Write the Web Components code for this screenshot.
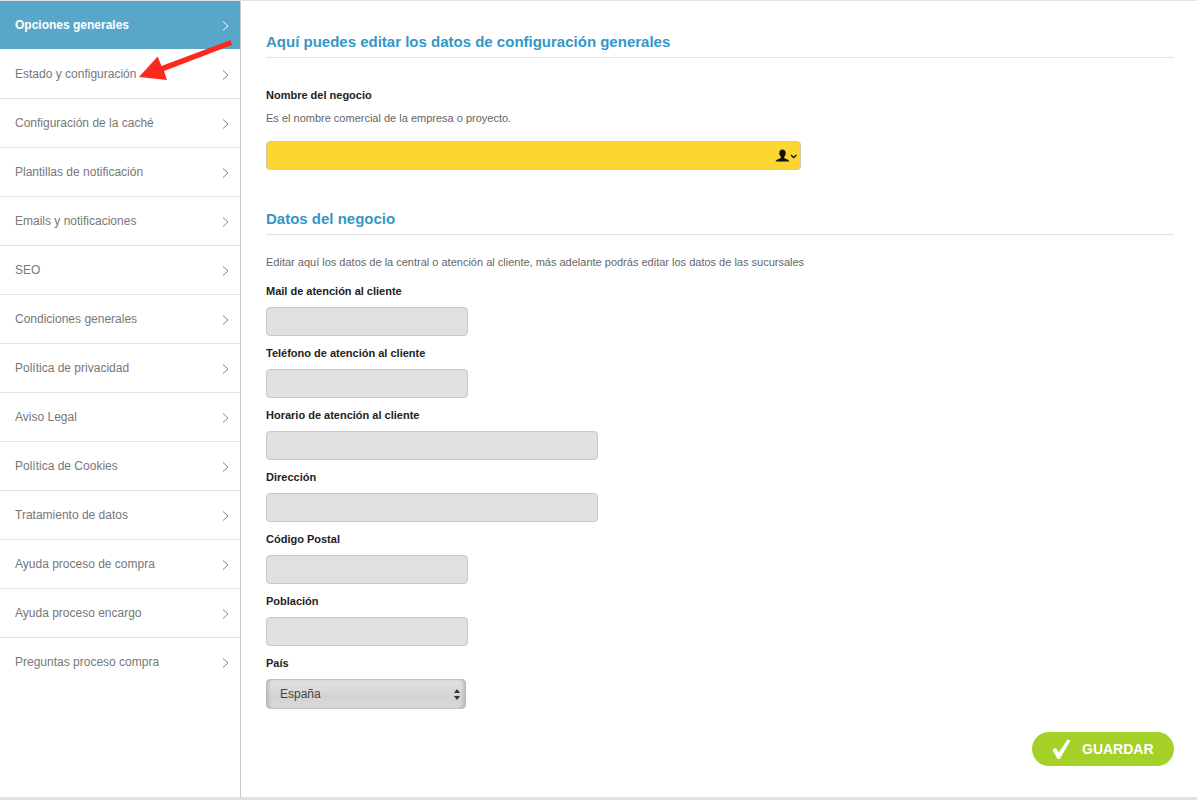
<!DOCTYPE html>
<html lang="es">
<head>
<meta charset="utf-8">
<title>Opciones generales</title>
<style>
  html, body { margin: 0; padding: 0; background: #fff; }
  body { font-family: "Liberation Sans", Arial, sans-serif; overflow: hidden; }
</style>
</head>
<body>
<config-page>
  <side-menu slot="menu">
    <menu-item active>Opciones generales</menu-item>
    <menu-item>Estado y configuración</menu-item>
    <menu-item>Configuración de la caché</menu-item>
    <menu-item>Plantillas de notificación</menu-item>
    <menu-item>Emails y notificaciones</menu-item>
    <menu-item>SEO</menu-item>
    <menu-item>Condiciones generales</menu-item>
    <menu-item>Política de privacidad</menu-item>
    <menu-item>Aviso Legal</menu-item>
    <menu-item>Política de Cookies</menu-item>
    <menu-item>Tratamiento de datos</menu-item>
    <menu-item>Ayuda proceso de compra</menu-item>
    <menu-item>Ayuda proceso encargo</menu-item>
    <menu-item last>Preguntas proceso compra</menu-item>
  </side-menu>

  <section-title>Aquí puedes editar los datos de configuración generales</section-title>
  <form-field label="Nombre del negocio" hint="Es el nombre comercial de la empresa o proyecto." style="margin-top:30px">
    <yellow-input></yellow-input>
  </form-field>

  <section-title style="margin-top:27px">Datos del negocio</section-title>
  <help-text style="margin-top:20px">Editar aquí los datos de la central o atención al cliente, más adelante podrás editar los datos de las sucursales</help-text>
  <form-field label="Mail de atención al cliente" style="margin-top:15px"><grey-input></grey-input></form-field>
  <form-field label="Teléfono de atención al cliente"><grey-input></grey-input></form-field>
  <form-field label="Horario de atención al cliente"><grey-input wide></grey-input></form-field>
  <form-field label="Dirección"><grey-input wide></grey-input></form-field>
  <form-field label="Código Postal"><grey-input></grey-input></form-field>
  <form-field label="Población"><grey-input></grey-input></form-field>
  <form-field label="País"><mac-select>España</mac-select></form-field>

  <save-button>GUARDAR</save-button>
  <red-arrow slot="overlay"></red-arrow>
</config-page>

<script>
// Contenedor general: menú a la izquierda, formulario a la derecha
class ConfigPage extends HTMLElement {
  constructor() {
    super();
    this.attachShadow({ mode: "open" });
    this.shadowRoot.innerHTML = `
      <style>
        :host {
          display: grid;
          grid-template-columns: 241px 1fr;
          height: 800px;
          box-sizing: border-box;
          border-top: 1px solid #e2e2e2;
          border-bottom: 3px solid #e0e0e0;
          position: relative;
        }
        .menu { border-right: 1px solid #c8c8c8; }
        .main {
          padding: 29px 23px 0 25px;
          display: flex;
          flex-direction: column;
          min-width: 0;
        }
      </style>
      <div class="menu"><slot name="menu"></slot></div>
      <div class="main"><slot></slot></div>
      <slot name="overlay"></slot>
    `;
  }
}

class SideMenu extends HTMLElement {
  constructor() {
    super();
    this.attachShadow({ mode: "open" });
    this.shadowRoot.innerHTML = `
      <style>:host { display: flex; flex-direction: column; }</style>
      <slot></slot>
    `;
  }
}

class MenuItem extends HTMLElement {
  constructor() {
    super();
    this.attachShadow({ mode: "open" });
    this.shadowRoot.innerHTML = `
      <style>
        :host {
          display: flex;
          align-items: center;
          justify-content: space-between;
          box-sizing: border-box;
          height: 49px;
          padding: 0 11px 0 15px;
          border-bottom: 1px solid #e2e2e2;
          font-size: 12px;
          color: #777;
        }
        :host([active]) {
          background: #58a6c9;
          color: #fff;
          font-weight: bold;
          height: 48px;
          margin-bottom: 1px;
          border-bottom: 0;
        }
        :host([last]) { border-bottom-color: transparent; }
        svg { display: block; width: 7px; height: 10px; margin-top: 2px; }
        path { fill: none; stroke: #888; stroke-width: 1; }
        :host([active]) path { stroke: #fff; }
      </style>
      <span><slot></slot></span>
      <svg viewBox="0 0 7 10"><path d="M1 .5 6 5 1 9.500"/></svg>
    `;
  }
}

class SectionTitle extends HTMLElement {
  constructor() {
    super();
    this.attachShadow({ mode: "open" });
    this.shadowRoot.innerHTML = `
      <style>
        :host {
          display: block;
          height: 27px;
          border-bottom: 1px solid #e2e2e2;
          font-size: 15px;
          line-height: 24px;
          font-weight: bold;
          color: #3497c6;
        }
      </style>
      <slot></slot>
    `;
  }
}

class HelpText extends HTMLElement {
  constructor() {
    super();
    this.attachShadow({ mode: "open" });
    this.shadowRoot.innerHTML = `
      <style>
        :host { display: block; font-size: 11px; line-height: 14px; color: #666; }
      </style>
      <slot></slot>
    `;
  }
}

class FormField extends HTMLElement {
  constructor() {
    super();
    this.attachShadow({ mode: "open" });
  }

  connectedCallback() {
    const label = this.getAttribute("label") || "";
    const hint = this.getAttribute("hint");
    this.shadowRoot.innerHTML = `
      <style>
        :host { display: block; margin-bottom: 10px; }
        .label { font-size: 11px; line-height: 14px; font-weight: bold; color: #222; margin-bottom: 9px; }
        .hint { font-size: 11px; line-height: 14px; color: #666; margin: 9px 0 16px; }
      </style>
      <div class="label">${label}</div>
      ${hint ? `<div class="hint">${hint}</div>` : ""}
      <slot></slot>
    `;
  }
}

class GreyInput extends HTMLElement {
  constructor() {
    super();
    this.attachShadow({ mode: "open" });
    this.shadowRoot.innerHTML = `
      <style>
        :host { display: block; width: 202px; height: 29px; }
        :host([wide]) { width: 332px; }
        input {
          display: block;
          box-sizing: border-box;
          width: 100%;
          height: 100%;
          margin: 0;
          background: #e0e0e0;
          border: 1px solid #c8c8c8;
          border-radius: 4px;
        }
      </style>
      <input type="text">
    `;
  }
}

// Campo amarillo con el icono de usuario del autocompletado
class YellowInput extends HTMLElement {
  constructor() {
    super();
    this.attachShadow({ mode: "open" });
    this.shadowRoot.innerHTML = `
      <style>
        :host { display: block; position: relative; width: 535px; height: 29px; }
        input {
          display: block;
          box-sizing: border-box;
          width: 100%;
          height: 100%;
          margin: 0;
          background: #fdd631;
          border: 1px solid #d0c8a8;
          border-radius: 4px;
        }
        svg { position: absolute; right: 2px; top: 8px; width: 24px; height: 14px; }
      </style>
      <input type="text">
      <svg viewBox="0 0 24 14">
        <path fill="#111" d="M7.500 0.500c2 0 3.200 1.400 3.200 3.400 0 1.700-.8 3-1.500 3.800v1.200c.6.7 4.300 1.200 5.300 3.600H.5c1-2.400 4.700-2.900 5.300-3.600V7.700C5.100 6.900 4.300 5.600 4.300 3.900c0-2 1.200-3.400 3.200-3.400z"/>
        <path fill="none" stroke="#111" stroke-width="1.300" d="M16 6l2.700 2.500L21.400 6"/>
      </svg>
    `;
  }
}

class MacSelect extends HTMLElement {
  constructor() {
    super();
    this.attachShadow({ mode: "open" });
    this.shadowRoot.innerHTML = `
      <style>
        :host {
          display: flex;
          align-items: center;
          justify-content: space-between;
          box-sizing: border-box;
          width: 200px;
          height: 30px;
          padding: 0 6px 0 14px;
          border-radius: 5px;
          background: linear-gradient(#e2e2e2, #d8d8d8 50%, #d3d3d3 55%, #d9d9d9);
          box-shadow: inset 4px 0 4px -2px #b0b0b0, inset -4px 0 4px -2px #b0b0b0, inset 0 1px 1px #c6c6c6, inset 0 -1px 1px #cbcbcb;
          font-size: 12px;
          color: #444;
        }
        svg { display: block; width: 6px; height: 11px; }
      </style>
      <span><slot></slot></span>
      <svg viewBox="0 0 6 11"><path fill="#333" d="M3 0 6 4H0zM0 7h6l-3 4z"/></svg>
    `;
  }
}

class SaveButton extends HTMLElement {
  constructor() {
    super();
    this.attachShadow({ mode: "open" });
    this.shadowRoot.innerHTML = `
      <style>
        :host {
          display: flex;
          align-items: center;
          align-self: flex-end;
          box-sizing: border-box;
          width: 142px;
          height: 34px;
          margin-top: 13px;
          padding-left: 20px;
          gap: 11px;
          border-radius: 17px;
          background: #a5d027;
          color: #fff;
          font-size: 14px;
          font-weight: bold;
        }
        svg { display: block; width: 19px; height: 20px; }
      </style>
      <svg viewBox="0 0 19 20"><path fill="#fff" d="M.5 11 3.500 8.800 6.800 13.500 15.500 .5 18.500 1.500 7.800 20H5.500z"/></svg>
      <slot></slot>
    `;
  }
}

// Flecha roja dibujada encima del menú
class RedArrow extends HTMLElement {
  constructor() {
    super();
    this.attachShadow({ mode: "open" });
    this.shadowRoot.innerHTML = `
      <style>
        :host { position: absolute; left: 135px; top: 35px; width: 100px; height: 50px; pointer-events: none; }
        svg { display: block; width: 100%; height: 100%; }
      </style>
      <svg viewBox="135 36 100 50"><path fill="#fb2a1d" d="M139 77 157.700 56.500 161.500 66 230.500 40 232 45 164 71 167 80z"/></svg>
    `;
  }
}

customElements.define("config-page", ConfigPage);
customElements.define("side-menu", SideMenu);
customElements.define("menu-item", MenuItem);
customElements.define("section-title", SectionTitle);
customElements.define("help-text", HelpText);
customElements.define("form-field", FormField);
customElements.define("grey-input", GreyInput);
customElements.define("yellow-input", YellowInput);
customElements.define("mac-select", MacSelect);
customElements.define("save-button", SaveButton);
customElements.define("red-arrow", RedArrow);
</script>
</body>
</html>
